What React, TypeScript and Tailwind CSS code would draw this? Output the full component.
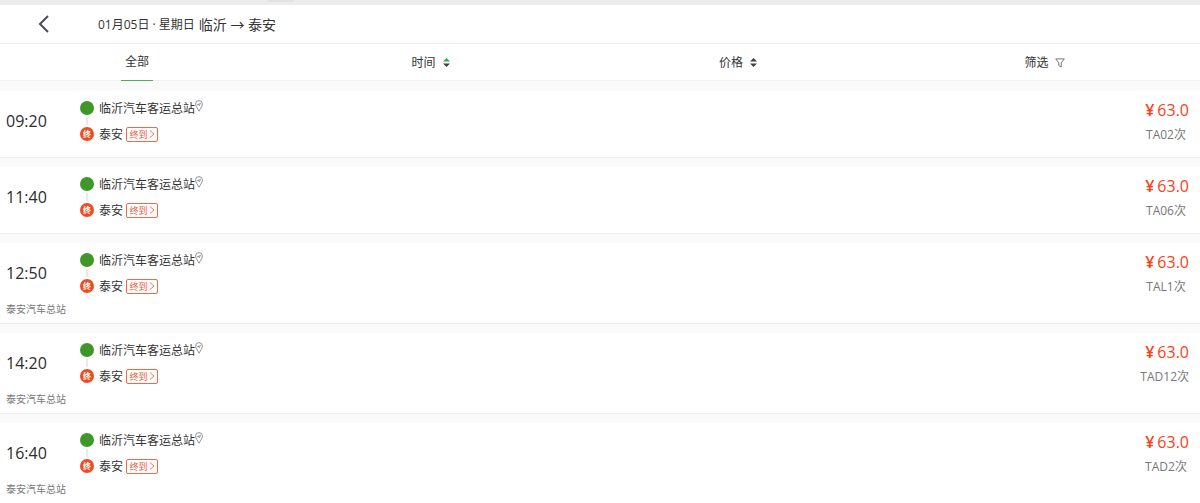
import React from 'react';

type Trip = {
  time: string;
  code: string;
  terminal?: string;
};

const trips: Trip[] = [
  { time: '09:20', code: 'TA02次' },
  { time: '11:40', code: 'TA06次' },
  { time: '12:50', code: 'TAL1次', terminal: '泰安汽车总站' },
  { time: '14:20', code: 'TAD12次', terminal: '泰安汽车总站' },
  { time: '16:40', code: 'TAD2次', terminal: '泰安汽车总站' },
];

const SortIcon: React.FC<{ active?: boolean }> = ({ active }) => (
  <svg width="7" height="9" viewBox="0 0 7 9" aria-hidden="true">
    <path d="M3.5 0 7 3.5H0Z" fill={active ? '#2fae3f' : '#3c4048'} />
    <path d="M0 5.5H7L3.5 9Z" fill="#3c4048" />
  </svg>
);

const FilterIcon = () => (
  <svg width="10" height="10" viewBox="0 0 10 10" fill="none" stroke="#666a70" strokeWidth="0.9" aria-hidden="true">
    <path d="M0.7 0.9H9.3L6.2 4.9V9L3.8 7.6V4.9Z" strokeLinejoin="round" />
  </svg>
);

const PinIcon = () => (
  <svg width="8" height="12" viewBox="0 0 8 12" fill="none" stroke="#777" strokeWidth="0.8" aria-hidden="true">
    <path d="M4 11.2C3.2 9.2 0.6 6.6 0.6 4A3.4 3.4 0 0 1 7.4 4C7.4 6.6 4.8 9.2 4 11.2Z" />
    <path d="M2.3 4.8 5.6 3.2 4.3 5.9 4 4.4Z" strokeWidth="0.6" />
  </svg>
);

const TripCard: React.FC<{ trip: Trip }> = ({ trip }) => (
  <li className="flex min-h-[67px] border-b border-[#eeeeee] bg-white pl-[6px] pr-[11px]">
    <div className="w-[74px] shrink-0 pt-5">
      <p className="text-base leading-5 text-[#2c2c2c]">{trip.time}</p>
      {trip.terminal && (
        <p className="mt-[19px] pb-[7px] text-[10px] leading-[14px] text-[#777777]">{trip.terminal}</p>
      )}
    </div>

    <div className="flex-1 pt-2 text-xs text-[#333333]">
      <div className="flex h-[18px] items-center">
        <span className="mr-[5px] h-[14px] w-[14px] rounded-full bg-[#3f9728]" />
        <span className="pt-0.5">临沂汽车客运总站</span>
        <button aria-label="查看地图" className="cursor-pointer self-start pt-px">
          <PinIcon />
        </button>
      </div>
      <div className="flex h-2 w-[14px] justify-center">
        <span className="w-0.5 bg-[#e9e9e9]" />
      </div>
      <div className="flex h-[18px] items-center">
        <span className="mr-[5px] flex h-[14px] w-[14px] items-center justify-center rounded-full bg-[#ee4b20] text-[8px] font-bold leading-none text-white">
          终
        </span>
        <span className="pt-0.5">泰安</span>
        <button className="ml-[3px] flex h-[15px] w-8 cursor-pointer items-center justify-center gap-px rounded-[2px] border border-[#ee6a4b] text-[9px] leading-none text-[#ee5533]">
          终到
          <svg width="6" height="8" viewBox="0 0 6 8" fill="none" stroke="currentColor" strokeWidth="0.8" aria-hidden="true">
            <path d="M1 0.5 5 4 1 7.5" />
          </svg>
        </button>
      </div>
    </div>

    <div className="min-w-[46px] pt-[9px] text-center">
      <p className="flex h-5 items-center justify-end gap-[3px] text-base text-[#ff3d14]">
        <span className="font-semibold">¥</span>
        <span>63.0</span>
      </p>
      <p className="mt-[6px] text-xs leading-[18px] text-[#777777]">{trip.code}</p>
    </div>
  </li>
);

const App: React.FC = () => {
  return (
    <div className="w-full bg-[#fafafa] font-['Open_Sans','Noto_Sans_CJK_SC',sans-serif] text-[#333333]">
      <div className="h-[5px] bg-[#ececec] pl-[268px]">
        <div className="h-[2px] w-[26px] rounded-b-[2px] bg-[#e2e2e2]" />
      </div>

      <header className="flex h-[39px] items-center border-b border-[#eeeeee] bg-white pl-[38px]">
        <button aria-label="返回" className="mr-12 cursor-pointer">
          <svg width="12" height="18" viewBox="0 0 12 18" fill="none" stroke="#4a4d55" strokeWidth="2" aria-hidden="true">
            <path d="M10 1 2 9 10 17" />
          </svg>
        </button>
        <h1 className="flex items-center gap-1 whitespace-nowrap pt-0.5">
          <span className="text-xs">01月05日 · 星期日</span>
          <span className="text-sm">临沂 → 泰安</span>
        </h1>
      </header>

      <nav className="grid h-[37px] grid-cols-[274fr_313fr_302fr_311fr] justify-items-center border-b border-[#f2f2f2] bg-white text-xs">
        <button className="h-[37px] cursor-pointer border-b border-[#4db050] px-1">全部</button>
        <button className="flex cursor-pointer items-center gap-[7px]">
          时间
          <SortIcon active />
        </button>
        <button className="flex cursor-pointer items-center gap-[7px]">
          价格
          <SortIcon />
        </button>
        <button className="flex cursor-pointer items-center gap-[6px]">
          筛选
          <FilterIcon />
        </button>
      </nav>

      <ul className="flex flex-col gap-[9px] pt-[10px]">
        {trips.map((trip) => (
          <TripCard key={trip.time} trip={trip} />
        ))}
      </ul>
    </div>
  );
};

export default App;
